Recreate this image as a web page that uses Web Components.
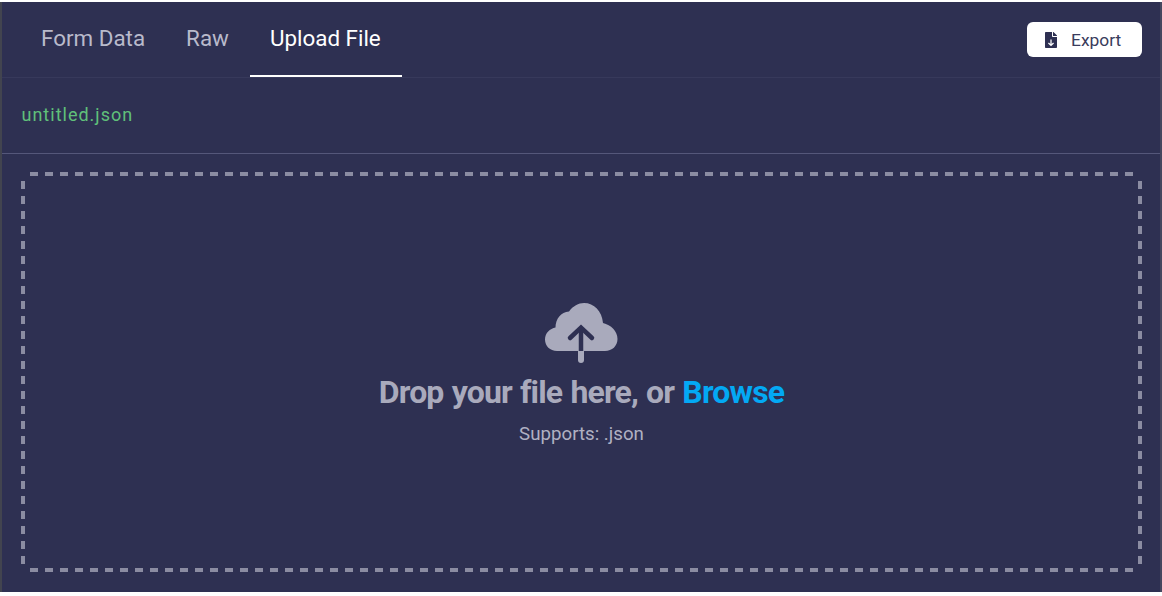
<!DOCTYPE html>
<html>
<head>
<meta charset="utf-8">
<style>
  html, body { margin: 0; background: #fff; }
  body { font-family: Roboto, sans-serif; padding-top: 2px; min-height: 594px; }
</style>
</head>
<body>
<upload-panel>
  <tab-bar slot="tabs"></tab-bar>
  <file-name slot="file">untitled.json</file-name>
  <drop-zone slot="drop"></drop-zone>
</upload-panel>
<script>
class UploadPanel extends HTMLElement {
  constructor() {
    super();
    this.attachShadow({ mode: "open" });
    this.shadowRoot.innerHTML = `
      <style>
        :host {
          display: flex;
          flex-direction: column;
          width: 1162px;
          height: 590px;
          box-sizing: border-box;
          background: #2e3052;
          border-left: 2px solid #42444f;
          border-right: 2px solid #45475f;
        }
      </style>
      <slot name="tabs"></slot>
      <slot name="file"></slot>
      <slot name="drop"></slot>
    `;
  }
}

class TabBar extends HTMLElement {
  constructor() {
    super();
    this.attachShadow({ mode: "open" });
    this.shadowRoot.innerHTML = `
      <style>
        :host {
          display: flex;
          justify-content: space-between;
          align-items: center;
          height: 76px;
          box-sizing: border-box;
          border-bottom: 1px solid #37395b;
          padding: 0 18px 0 19px;
          font-family: Roboto, sans-serif;
        }
        .tabs { display: flex; height: 100%; }
        .tab {
          box-sizing: border-box;
          height: 75px;
          padding: 0 20.5px;
          font-size: 22.4px;
          line-height: 73px;
          color: #b9bacb;
        }
        .tab:first-child { padding-left: 20px; }
        .tab:nth-child(2) { padding-right: 21px; }
        .active {
          padding: 0 21px 0 20px;
          color: #fff;
          border-bottom: 2px solid #fff;
        }
        button {
          display: flex;
          align-items: center;
          gap: 14px;
          width: 115px;
          height: 35px;
          padding: 0 0 0 18px;
          margin: 0;
          border: 0;
          border-radius: 6px;
          background: #fff;
          color: #3a3c5c;
          font: 17.4px Roboto, sans-serif;
        }
        svg { width: 12px; height: 16px; fill: #2e3052; flex: none; }
      </style>
      <div class="tabs">
        <div class="tab">Form Data</div>
        <div class="tab">Raw</div>
        <div class="tab active">Upload File</div>
      </div>
      <button>
        <svg viewBox="0 0 384 512">
          <path d="M224 136V0H24C10.7 0 0 10.7 0 24v464c0 13.3 10.7 24 24 24h336c13.3 0 24-10.7 24-24V160H248c-13.2 0-24-10.8-24-24zM377 105L279.100 7c-4.500-4.500-10.600-7-17-7H256v128h128v-6.100c0-6.300-2.500-12.400-7-16.900z"/>
          <path fill="none" stroke="#fff" stroke-width="40" d="M192 240V420M110 350l82 80 82-80"/>
        </svg>
        <span>Export</span>
      </button>
    `;
  }
}

class FileName extends HTMLElement {
  constructor() {
    super();
    this.attachShadow({ mode: "open" });
    this.shadowRoot.innerHTML = `
      <style>
        :host {
          display: flex;
          align-items: center;
          height: 76px;
          box-sizing: border-box;
          padding: 0 0 2px 19.5px;
          border-bottom: 1px solid #55577a;
          color: #60c07a;
          font: 18px Roboto, sans-serif;
          letter-spacing: 1px;
        }
      </style>
      <slot></slot>
    `;
  }
}

class DropZone extends HTMLElement {
  constructor() {
    super();
    this.attachShadow({ mode: "open" });
    this.shadowRoot.innerHTML = `
      <style>
        :host {
          display: block;
          flex: 1;
          padding: 18px 18px 20px 19px;
          font-family: Roboto, sans-serif;
          --dash: #8b8ca2;
        }
        .box {
          display: flex;
          flex-direction: column;
          align-items: center;
          justify-content: center;
          box-sizing: border-box;
          height: 100%;
          padding-top: 3px;
          color: #a9aabc;
          /* dashes start 9px in and the corners stay empty, a css dashed border can't do that */
          background:
            repeating-linear-gradient(90deg, var(--dash) 0 8px, transparent 8px 15px) 9px 0 / calc(100% - 9px - 9px) 4px no-repeat,
            repeating-linear-gradient(90deg, var(--dash) 0 8px, transparent 8px 15px) 9px 100% / calc(100% - 9px - 9px) 4px no-repeat,
            repeating-linear-gradient(180deg, var(--dash) 0 8px, transparent 8px 15px) 0 9px / 4px calc(100% - 9px - 8px) no-repeat,
            repeating-linear-gradient(180deg, var(--dash) 0 8px, transparent 8px 15px) 100% 9px / 4px calc(100% - 9px - 8px) no-repeat;
        }
        svg { width: 74px; height: 60px; display: block; margin-left: -1px; }
        .title { font-size: 32px; font-weight: 700; letter-spacing: -.84px; word-spacing: 1px; margin-top: 10px; line-height: 38px; }
        .title span { color: #03a9f4; }
        .sub { font-size: 18.7px; margin-top: 13px; line-height: 21px; color: #b0b1c2; }
      </style>
      <div class="box">
        <svg viewBox="0 0 74 60">
          <path fill="#a9aabc" d="M13 48C6 48 1 43 1 36.500 1 30 6 25.500 11.500 24.500 11.500 16 17 9 25 8.500 29 3 34.500 0 40 0 50 0 58 8 59 20 67 22 73.500 28 73.500 36 73.500 43 68 48 61 48Z"/>
          <path fill="none" stroke="#a9aabc" stroke-width="6" stroke-linecap="round" d="M37 48V57"/>
          <path fill="none" stroke="#2e3052" stroke-width="4.500" d="M37 48V25"/>
          <path fill="none" stroke="#2e3052" stroke-width="4.500" stroke-linecap="round" stroke-linejoin="miter" d="M26 35 37 24.500 48 35"/>
        </svg>
        <div class="title">Drop your file here, or <span>Browse</span></div>
        <div class="sub">Supports: .json</div>
      </div>
    `;
  }
}

customElements.define("upload-panel", UploadPanel);
customElements.define("tab-bar", TabBar);
customElements.define("file-name", FileName);
customElements.define("drop-zone", DropZone);
</script>
</body>
</html>
